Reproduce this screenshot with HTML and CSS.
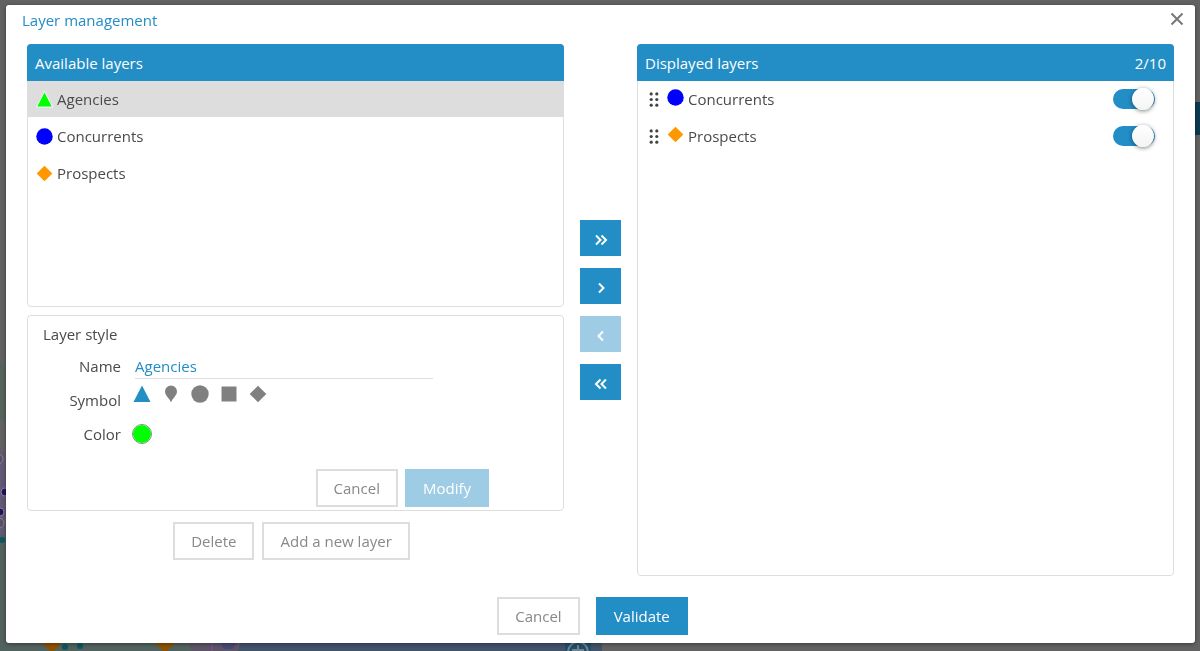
FILE: index.html
```html
<!DOCTYPE html>
<html lang="en">
<head>
  <meta charset="UTF-8"/>
  <meta name="viewport" content="width=device-width,initial-scale=1"/>
  <title>Layer management</title>
  <link rel="stylesheet" href="styles.css">
</head>
<body>

  <!-- Shared symbols -->
  <svg class="sprite" aria-hidden="true">
    <symbol id="triangle" viewBox="0 0 18 18"><path d="M9 .5 17.500 17H.5z"/></symbol>
    <symbol id="pin" viewBox="0 0 18 18"><path d="M9 17.500C8 14 3 10.500 3 6.500a6 6 0 0 1 12 0C15 10.500 10 14 9 17.500z"/></symbol>
    <symbol id="circle" viewBox="0 0 18 18"><circle cx="9" cy="9" r="8.700"/></symbol>
    <symbol id="square" viewBox="0 0 18 18"><path d="M1.500 1.500h15v15h-15z"/></symbol>
    <symbol id="diamond" viewBox="0 0 18 18"><path d="M9 .7 17.300 9 9 17.300.7 9z"/></symbol>
    <symbol id="grip" viewBox="0 0 10 16">
      <circle cx="2" cy="2" r="1.700"/><circle cx="8" cy="2" r="1.700"/>
      <circle cx="2" cy="8" r="1.700"/><circle cx="8" cy="8" r="1.700"/>
      <circle cx="2" cy="14" r="1.700"/><circle cx="8" cy="14" r="1.700"/>
    </symbol>
    <symbol id="one" viewBox="0 0 14 14"><path d="M5 2.500 9.500 7 5 11.500"/></symbol>
    <symbol id="all" viewBox="0 0 14 14"><path d="M2 2.500 6.500 7 2 11.500M7.500 2.500 12 7l-4.500 4.500"/></symbol>
  </svg>

  <!-- MAP BEHIND THE DIALOG -->
  <div class="map" aria-hidden="true">
    <svg class="map-left" width="610" height="311" viewBox="0 0 610 311">
      <path fill="#56645a" d="M0 20l8 14v46H0z"/>
      <path fill="#625a75" d="M0 108l8 12v75H0z"/>
      <path fill="#52625f" d="M0 195h8v96h200v20H0z"/>
      <circle cx="-2" cy="119" r="5" fill="#575066" stroke="#88819a"/>
      <circle cx="5" cy="152" r="4" fill="#27105b" stroke="#88819a"/>
      <circle cx="0" cy="172" r="4" fill="#27105b" stroke="#88819a"/>
      <circle cx="-1" cy="183" r="5" fill="#575066" stroke="#88819a"/>
      <circle cx="2" cy="200" r="3" fill="#0b5a60"/>
      <path fill="#5d5468" d="M188 302h50v9h-46z"/>
      <path fill="#474a78" d="M220 302h16l-3 7h-9z"/>
      <path fill="#42536a" d="M240 302h362v9H238z"/>
      <path fill="none" stroke="#73527c" stroke-width="2" d="M212 302v9"/>
      <path fill="#8c5200" d="M42 303h20l-8 8h-4zM155 303h20l-8 8h-4z"/>
      <circle cx="65" cy="307" r="3" fill="#0b5a60"/>
      <circle cx="80" cy="306" r="3" fill="#0b5a60"/>
      <path fill="#244d66" d="M565 302h26v9h-26z"/>
      <circle cx="578" cy="312" r="10" fill="none" stroke="#6d8492" stroke-width="2"/>
      <path stroke="#6d8492" stroke-width="2" d="M578 305v6M572 310h12"/>
    </svg>
    <span class="map-button"></span>
  </div>

  <!-- DIALOG -->
  <main class="dialog" role="dialog" aria-labelledby="dialogTitle">
    <header class="dialog-header">
      <h1 id="dialogTitle">Layer management</h1>
      <button class="close" type="button" aria-label="Close">
        <svg width="14" height="14" viewBox="0 0 14 14"><path d="M1.500 1.500l11 11M12.500 1.500l-11 11"/></svg>
      </button>
    </header>

    <div class="columns">
      <div class="left">
        <section class="panel available">
          <h2 class="panel-title">Available layers</h2>
          <ul class="layers">
            <li><button class="layer selected" type="button"><svg class="symbol green"><use href="#triangle"/></svg>Agencies</button></li>
            <li><button class="layer" type="button"><svg class="symbol blue"><use href="#circle"/></svg>Concurrents</button></li>
            <li><button class="layer" type="button"><svg class="symbol orange"><use href="#diamond"/></svg>Prospects</button></li>
          </ul>
        </section>

        <form class="panel style-form">
          <h2 class="form-title">Layer style</h2>
          <div class="field">
            <label for="layerName">Name</label>
            <input class="name-input" type="text" id="layerName" value="Agencies"/>
          </div>
          <div class="field">
            <span class="field-label" id="symbolLabel">Symbol</span>
            <div class="symbols" role="radiogroup" aria-labelledby="symbolLabel">
              <label><input type="radio" name="symbol" aria-label="Triangle" checked/><svg><use href="#triangle"/></svg></label>
              <label><input type="radio" name="symbol" aria-label="Pin"/><svg><use href="#pin"/></svg></label>
              <label><input type="radio" name="symbol" aria-label="Circle"/><svg><use href="#circle"/></svg></label>
              <label><input type="radio" name="symbol" aria-label="Square"/><svg><use href="#square"/></svg></label>
              <label><input type="radio" name="symbol" aria-label="Diamond"/><svg><use href="#diamond"/></svg></label>
            </div>
          </div>
          <div class="field">
            <label for="layerColor">Color</label>
            <input class="color-input" type="color" id="layerColor" value="#00ff00"/>
          </div>
          <div class="form-actions">
            <button class="btn" type="button">Cancel</button>
            <button class="btn primary" type="button" disabled>Modify</button>
          </div>
        </form>

        <div class="layer-actions">
          <button class="btn" type="button">Delete</button>
          <button class="btn" type="button">Add a new layer</button>
        </div>
      </div>

      <div class="movers">
        <button class="move" type="button" aria-label="Display all layers"><svg><use href="#all"/></svg></button>
        <button class="move" type="button" aria-label="Display layer"><svg><use href="#one"/></svg></button>
        <button class="move back" type="button" aria-label="Hide layer" disabled><svg><use href="#one"/></svg></button>
        <button class="move back" type="button" aria-label="Hide all layers"><svg><use href="#all"/></svg></button>
      </div>

      <section class="panel">
        <h2 class="panel-title">Displayed layers <span>2/10</span></h2>
        <ul class="layers">
          <li class="displayed">
            <button class="grip" type="button" aria-label="Move Concurrents"><svg><use href="#grip"/></svg></button>
            <svg class="symbol blue"><use href="#circle"/></svg>
            <label for="showConcurrents">Concurrents</label>
            <input class="toggle" type="checkbox" id="showConcurrents" checked/>
          </li>
          <li class="displayed">
            <button class="grip" type="button" aria-label="Move Prospects"><svg><use href="#grip"/></svg></button>
            <svg class="symbol orange"><use href="#diamond"/></svg>
            <label for="showProspects">Prospects</label>
            <input class="toggle" type="checkbox" id="showProspects" checked/>
          </li>
        </ul>
      </section>
    </div>

    <footer class="dialog-footer">
      <button class="btn" type="button">Cancel</button>
      <button class="btn primary" type="button">Validate</button>
    </footer>
  </main>

</body>
</html>
```

FILE: styles.css
```css
* { box-sizing: border-box; }
body {
  margin: 0;
  min-height: 100vh;
  padding: 5px 5px 8px 6px;
  display: flex;
  font-family: "Open Sans", sans-serif;
  font-size: 15px;
  line-height: 22px;
  color: #4a4a4a;
  background: #626262;
}
h1, h2, ul { margin: 0; padding: 0; }
h1, h2 { font-size: 15px; font-weight: normal; }
ul { list-style: none; }
button, input { font: inherit; color: inherit; }
button { padding: 0; border: none; background: none; cursor: pointer; }
svg { display: block; }
.sprite { position: absolute; width: 0; height: 0; }

/* Map */
.map {
  position: fixed;
  inset: 0;
}
.map-left {
  position: absolute;
  left: 0;
  bottom: 0;
}
.map-button {
  position: absolute;
  right: 0;
  top: 102px;
  width: 6px;
  height: 33px;
  background: #0b3a52;
}

/* Dialog */
.dialog {
  position: relative;
  flex: 1;
  display: flex;
  flex-direction: column;
  background: #fff;
  border-radius: 3px;
  box-shadow: 0 1px 4px rgba(0,0,0,0.4);
}
.dialog-header {
  display: flex;
  justify-content: space-between;
  align-items: flex-start;
  height: 39px;
  padding: 4px 11px 0 16px;
}
h1 { color: #238dc5; }
.close {
  padding: 3px 0;
}
.close svg {
  fill: none;
  stroke: #777;
  stroke-width: 2;
}
.columns {
  flex: 1;
  display: grid;
  grid-template-columns: 1fr 73px 1fr;
  padding: 0 21px;
}
.left {
  display: flex;
  flex-direction: column;
  gap: 8px;
}
.panel {
  border: 1px solid #ddd;
  border-radius: 4px;
}
.available { flex: 1; }
.panel-title {
  display: flex;
  justify-content: space-between;
  margin: -1px -1px 0;
  padding: 8px 8px 7px;
  background: #238dc5;
  border-radius: 4px 4px 0 0;
  color: #fff;
}

/* Layer lists */
.layers {
  display: flex;
  flex-direction: column;
  gap: 1px;
}
.layer {
  display: flex;
  align-items: center;
  gap: 4px;
  width: 100%;
  height: 36px;
  padding: 0 8px;
}
.layer.selected { background: #ddd; }
.symbol {
  width: 17px;
  height: 17px;
  overflow: visible;
}
.green {
  fill: #0f0;
  stroke: #fff;
  stroke-width: 1;
}
.blue { fill: #00f; }
.orange { fill: #ff9800; }
.displayed {
  display: flex;
  align-items: center;
  height: 36px;
  padding: 0 18px 0 11px;
}
.displayed .symbol {
  margin: 0 4px 4px 8px;
}
.displayed label { flex: 1; }
.grip svg {
  width: 10px;
  height: 15px;
  fill: #444;
}
.grip { cursor: grab; }
.toggle {
  appearance: none;
  display: flex;
  align-items: center;
  width: 42px;
  height: 20px;
  margin: 0;
  border-radius: 10px;
  background: #ccc;
}
.toggle::before {
  content: "";
  width: 22px;
  height: 22px;
  flex: none;
  border-radius: 50%;
  background: linear-gradient(#fff,#f4f4f4);
  box-shadow: 0 1px 4px rgba(0,0,0,0.5);
}
.toggle:checked { background: #238dc5; }
.toggle:checked::before { margin-left: 19px; }

/* Style form */
.style-form {
  padding: 7px 74px 3px 15px;
}
.form-title { margin-bottom: 4px; }
.field {
  display: grid;
  grid-template-columns: 78px minmax(0, 298px);
  column-gap: 14px;
  align-items: center;
  min-height: 34px;
}
.field > label, .field-label {
  text-align: right;
}
.name-input {
  width: 100%;
  height: 26px;
  padding: 0;
  border: none;
  border-bottom: 1px solid #ddd;
  outline: none;
  color: #238dc5;
}
.symbols {
  display: flex;
  gap: 11px;
  margin: 0 0 12px -2px;
}
.symbols input {
  position: absolute;
  opacity: 0;
}
.symbols svg {
  width: 18px;
  height: 18px;
  fill: #808080;
}
.symbols input:checked + svg { fill: #238dc5; }
.color-input {
  appearance: none;
  width: 20px;
  height: 20px;
  margin-left: -3px;
  padding: 0;
  border: 1px solid #888;
  border-radius: 50%;
  overflow: hidden;
}
.color-input::-webkit-color-swatch-wrapper { padding: 0; }
.color-input::-webkit-color-swatch { border: none; }
.form-actions {
  display: flex;
  justify-content: flex-end;
  gap: 7px;
  margin-top: 18px;
}

/* Buttons */
.btn {
  height: 38px;
  padding: 0 16px;
  border: 2px solid #ddd;
  background: #fff;
  color: #888;
}
.btn.primary {
  border-color: #238dc5;
  background: #238dc5;
  color: #fff;
}
.btn.primary:disabled {
  border-color: #9dcce4;
  background: #9dcce4;
}
.layer-actions {
  display: flex;
  justify-content: center;
  gap: 8px;
  padding: 3px 8px 16px 0;
}
.movers {
  display: flex;
  flex-direction: column;
  align-items: center;
  justify-content: center;
  gap: 12px;
}
.move {
  display: flex;
  align-items: center;
  justify-content: center;
  width: 41px;
  height: 36px;
  padding-top: 3px;
  background: #238dc5;
}
.move:disabled { background: #9dcce4; }
.move svg {
  width: 14px;
  height: 14px;
  fill: none;
  stroke: #fff;
  stroke-width: 2;
}
.back svg { transform: scaleX(-1); }
.dialog-footer {
  display: flex;
  justify-content: center;
  gap: 16px;
  padding: 21px 16px 8px 0;
}
```
